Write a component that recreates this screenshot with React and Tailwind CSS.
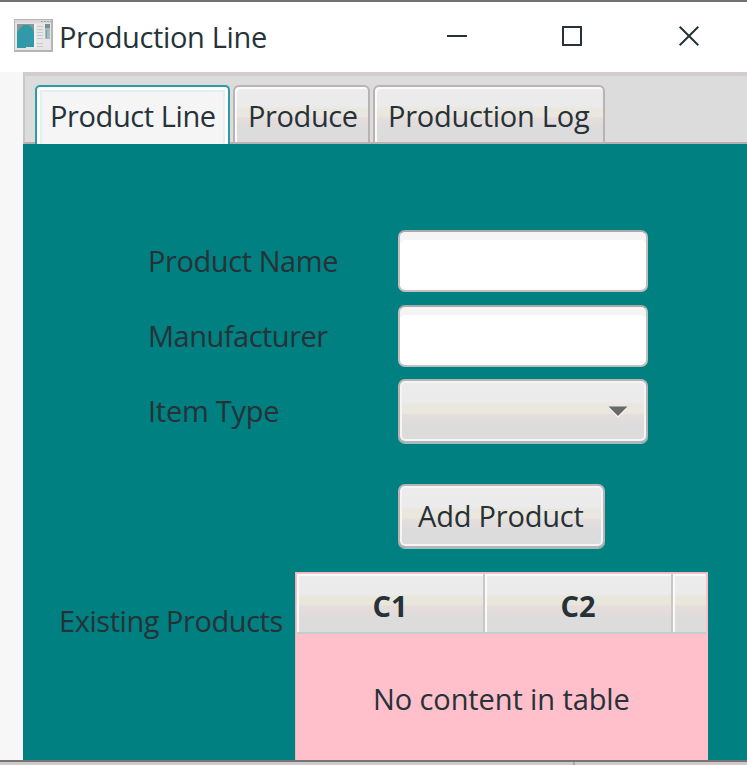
import React from "react";

const raised =
  "border-2 border-[#b9b3b3] bg-[linear-gradient(to_bottom,#ececec_0%,#ebebeb_34%,#e9e7de_40%,#e9e7de_53%,#e5dddd_57%,#e2dcdc_66%,#dcdcdc_74%,#dcdcdc_100%)]";

const headCell =
  "flex items-center justify-center border-b-2 border-b-[#c6cccc] bg-[linear-gradient(to_bottom,#ececec_0%,#ebebeb_34%,#e9e7dc_39%,#e9e7dc_52%,#e6dcdc_56%,#e3dcdc_68%,#dcdcdc_74%,#dcdcdc_100%)] shadow-[inset_2px_2px_0_#fafafa]";

function Text({ className = "", children }) {
  return <span className={`block whitespace-nowrap leading-[40px] ${className}`}>{children}</span>;
}

function AppIcon() {
  return (
    <svg width="40" height="34" viewBox="0 0 40 34" shapeRendering="crispEdges">
      <rect x="0" y="0" width="39" height="33" fill="#b5b5b5" />
      <rect x="1" y="1" width="36" height="30" fill="#e6e6e6" />
      <rect x="1" y="1" width="36" height="3" fill="#dcd6d6" />
      <path d="M27 2.5h10" stroke="#a5a5a5" strokeDasharray="2 1" />
      <rect x="3" y="5" width="17" height="23" fill="#8b9796" />
      <path d="M3 28V13l3-4 4-3h5l3 3 2 4v15z" fill="#3199a8" shapeRendering="auto" />
      <rect x="3" y="28" width="9" height="1" fill="#3199a8" />
      <rect x="20" y="5" width="2" height="24" fill="#f1efef" />
      <path d="M23 7.5h6M23 10.5h6M23 13.5h6M23 16.5h6M23 19.5h6M23 24.5h6M23 27.5h6" stroke="#cdc9c9" />
      <rect x="31" y="5" width="5" height="15" fill="#a3bcbe" />
      <rect x="31" y="5" width="5" height="4" fill="#7d8c8c" />
      <path d="M32.5 11v8" stroke="#769fa2" />
    </svg>
  );
}

function TitleBar() {
  return (
    <header className="flex h-[72px] shrink-0 border-t-2 border-[#6f7070] bg-white pl-[14px] pt-[17px]">
      <AppIcon />
      <Text className="-mt-[2px] ml-[5px] w-[385px] text-[29px] tracking-[-0.35px]">Production Line</Text>
      <svg width="22" height="34" viewBox="0 0 22 34" className="ml-[2px]" shapeRendering="crispEdges">
        <path d="M1 17h20" stroke="#263238" strokeWidth="2" />
      </svg>
      <svg width="22" height="34" viewBox="0 0 22 34" className="ml-[93px]" shapeRendering="crispEdges">
        <rect x="2" y="8" width="18" height="18" fill="none" stroke="#263238" strokeWidth="2" />
      </svg>
      <svg width="22" height="34" viewBox="0 0 22 34" className="ml-[95px]">
        <path d="M1.7 7.7l18.6 18.6M20.3 7.7L1.7 26.3" stroke="#263238" strokeWidth="2" />
      </svg>
    </header>
  );
}

function Tabs() {
  return (
    <nav className="flex h-[72px] shrink-0 items-end border-b-2 border-l-2 border-t-4 border-b-[#b9aeb0] border-l-[#cbc7c7] border-t-[#d2cccf] bg-[#dcdcdc] pl-[10px]">
      <div className="-mb-[2px] h-[59px] w-[195px] rounded-t-[5px] border-2 border-b-0 border-[#2c9ba7] bg-[#f5f5f5] pl-[13px] pt-[9px] shadow-[inset_0_3px_0_#fff,inset_3px_0_0_#fff,inset_-3px_0_0_#fff,inset_0_5px_0_#e5eff1,inset_5px_0_0_#e5eff1,inset_-5px_0_0_#e5eff1]">
        <Text className="text-[29px] tracking-[-0.4px]">Product Line</Text>
      </div>
      <div className={`-mb-[2px] ml-[3px] h-[59px] w-[137px] rounded-t-[6px] ${raised} pl-[13px] pt-[9px] shadow-[inset_2px_2px_0_#fafafa]`}>
        <Text className="text-[29px] tracking-[-0.4px]">Produce</Text>
      </div>
      <div className={`-mb-[2px] ml-[3px] h-[59px] w-[232px] rounded-t-[6px] ${raised} pl-[13px] pt-[9px] shadow-[inset_2px_2px_0_#fafafa]`}>
        <Text className="text-[29px] tracking-[-0.25px]">Production Log</Text>
      </div>
    </nav>
  );
}

function Field() {
  return (
    <input className="h-[62px] w-[250px] rounded-[7px] border-2 border-[#c4bfbf] border-t-[#aaa8a8] bg-white px-3 shadow-[inset_0_8px_0_#f5f5f5] outline-none" />
  );
}

function Form() {
  return (
    <section className="grid grid-cols-[250px_250px] gap-y-[13px] pl-[125px] pt-[86px]">
      <Text className="pt-[11px] text-[29px] tracking-[-0.42px]">Product Name</Text>
      <Field />
      <Text className="pt-[11px] text-[29px] tracking-[-0.5px]">Manufacturer</Text>
      <Field />
      <Text className="pt-[11px] text-[29px] tracking-[-0.25px]">Item Type</Text>
      <button className={`-mt-px flex h-[64px] items-center justify-end rounded-[7px] ${raised} pr-[16px] shadow-[inset_0_0_0_2px_#f5f5f5,0_1px_0_#8fc5c5]`}>
        <svg width="24" height="14" viewBox="0 0 24 14">
          <path d="M2 3h20L12 14z" fill="#f5f5f5" />
          <path d="M2.5 2.5h19L12 12z" fill="#666a68" />
        </svg>
      </button>
    </section>
  );
}

function ProductTable() {
  return (
    <div className="flex h-[188px] w-[413px] flex-col border-l border-t border-[#e9b5c2] bg-[#ffc0cb] pl-px pt-px">
      <div className="flex h-[60px] w-[409px]">
        <div className={`w-[188px] border-r-2 border-r-[#c9c6c6] ${headCell}`}>
          <Text className="pt-[6px] text-[29px] font-bold">C1</Text>
        </div>
        <div className={`w-[188px] border-r-2 border-r-[#c9c6c6] ${headCell}`}>
          <Text className="pt-[6px] text-[29px] font-bold">C2</Text>
        </div>
        <div className={`w-[33px] ${headCell}`} />
      </div>
      <Text className="pl-[76px] pt-[45px] text-[29px] tracking-[-0.1px]">No content in table</Text>
    </div>
  );
}

export default function App() {
  return (
    <div className="flex h-[765px] w-[747px] flex-col overflow-hidden bg-[#f7f7f7] font-['Open_Sans','Noto_Sans',sans-serif] text-[#263238]">
      <TitleBar />
      <div className="flex h-[688px] shrink-0">
        <div className="w-[23px] shrink-0 bg-[#f7f7f7]" />
        <main className="flex w-[724px] flex-col overflow-hidden bg-[#008080]">
          <Tabs />
          <Form />
          <div className="pl-[375px] pt-[41px]">
            <button className={`block h-[64px] w-[207px] rounded-[7px] ${raised} pl-[18px] text-left shadow-[inset_0_0_0_2px_#f5f5f5,0_1px_0_#8fc5c5]`}>
              <Text className="text-[29px] tracking-[-0.2px]">Add Product</Text>
            </button>
          </div>
          <div className="flex pt-[24px]">
            <Text className="w-[272px] pl-[36px] pt-[29px] text-[29px] tracking-[-0.45px]">Existing Products</Text>
            <ProductTable />
          </div>
        </main>
      </div>
      <footer className="flex h-[5px] shrink-0 border-t-2 border-[#757373] bg-[#d0cacc]">
        <div className="w-[575px] border-r-2 border-[#aaa6a7]" />
      </footer>
    </div>
  );
}
